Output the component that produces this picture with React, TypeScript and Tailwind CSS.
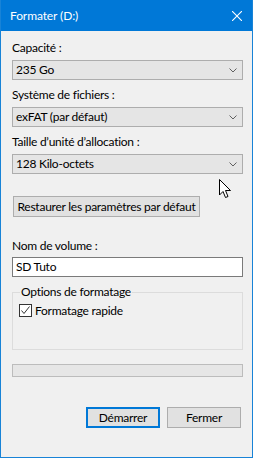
import React from "react";

const font = { fontFamily: 'Lato, "Noto Sans", sans-serif' };
const txt = "text-[12px] leading-[16px] tracking-[-0.25px] text-black";

function Chevron() {
  return (
    <svg width="8" height="5" viewBox="0 0 8 5" className="absolute right-[5px] top-[7px]">
      <path d="M0.5 0.5 L4 4 L7.5 0.5" fill="none" stroke="#606060" strokeWidth="1" />
    </svg>
  );
}

function Combo({ value }: { value: string }) {
  return (
    <div className={`relative h-[20px] border border-[#adadad] bg-[#e5e5e5] flex items-center pl-[3px] ${txt}`}>
      {value}
      <Chevron />
    </div>
  );
}

function Label({ children, cls }: { children: React.ReactNode; cls: string }) {
  return <div className={`${cls} ${txt}`}>{children}</div>;
}

export default function App() {
  return (
    <div
      className="relative w-[253px] h-[458px] bg-[#f0f0f0] border-x border-b border-[#1883d7] flex flex-col overflow-hidden"
      style={font}
    >
      <div className="h-[31px] -mx-px bg-[#0078d7] flex items-center justify-between pl-[10px] pr-[11px] shrink-0">
        <span className="text-white text-[12px] leading-[16px] tracking-[-0.1px]">Formater (D:)</span>
        <svg width="10" height="10" viewBox="0 0 10 10">
          <path d="M0 0 L10 10 M10 0 L0 10" stroke="#ffffff" strokeWidth="1.1" />
        </svg>
      </div>
      <div className="pl-[11px] pr-[9px] flex flex-col">
        <Label cls="mt-[9px] h-[20px]">Capacité :</Label>
        <Combo value="235 Go" />
        <Label cls="mt-[7px] h-[20px]">Système de fichiers :</Label>
        <Combo value="exFAT (par défaut)" />
        <Label cls="mt-[7px] h-[20px]">Taille d’unité d’allocation :</Label>
        <Combo value="128 Kilo-octets" />
        <div className="mt-[22px] flex">
          <button className={`w-[187px] h-[21px] border border-[#adadad] bg-[#e1e1e1] ml-px text-center ${txt}`}>
            Restaurer les paramètres par défaut
          </button>
        </div>
        <Label cls="mt-[21px] h-[19px]">Nom de volume :</Label>
        <div className={`h-[20px] border border-[#7a7a7a] bg-white flex items-center pl-[3px] ${txt}`}>
          SD Tuto
        </div>
        <div className="relative mt-[15px] h-[58px] border border-[#dcdcdc]">
          <span className={`absolute -top-[9px] left-[7px] bg-[#f0f0f0] px-[1px] ${txt}`}>
            Options de formatage
          </span>
          <div className="mt-[11px] ml-[6px] h-[13px] flex items-center gap-[3px]">
            <div className="w-[13px] h-[13px] shrink-0 border border-[#333333] bg-white flex items-center justify-center">
              <svg width="11" height="11" viewBox="0 0 11 11">
                <path d="M1.5 5.5 L4 8.5 L9.5 1.5" fill="none" stroke="#333333" strokeWidth="1" />
              </svg>
            </div>
            <span className={txt}>Formatage rapide</span>
          </div>
        </div>
        <div className="mt-[14px] h-[13px] border border-[#bcbcbc] bg-[#e6e6e6]" />
        <div className="mt-[30px] flex justify-end gap-[7px] pr-[2px]">
          <button className={`w-[74px] h-[21px] border-2 border-[#0078d7] bg-[#e1e1e1] ${txt}`}>
            Démarrer
          </button>
          <button className={`w-[74px] h-[21px] border border-[#adadad] bg-[#e1e1e1] ${txt}`}>
            Fermer
          </button>
        </div>
      </div>
      <svg width="13" height="20" viewBox="0 0 13 20" className="absolute left-[218px] top-[179px]">
        <path d="M0.5 0.5 L0.5 16 L4 12.5 L6.5 18.5 L9 17.5 L6.5 11.5 L11.5 11.5 Z" fill="#ffffff" stroke="#000000" strokeWidth="1" />
      </svg>
    </div>
  );
}
